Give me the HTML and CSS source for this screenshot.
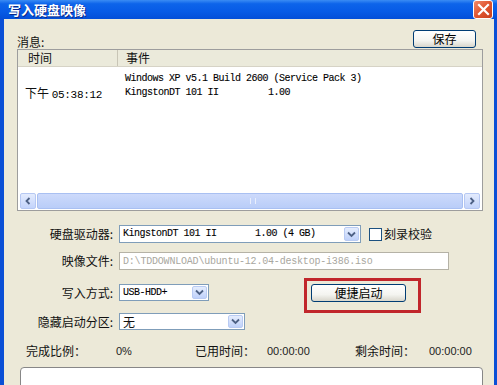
FILE: index.html
```html
<!DOCTYPE html>
<html>
<head>
<meta charset="utf-8">
<link rel="stylesheet" href="styles.css">
</head>
<body>
<div class="window">
  <div class="titlebar">
    <span class="title">写入硬盘映像</span>
    <span class="close"><svg width="13" height="13" viewBox="0 0 13 13"><path d="M2 2 L11 11 M11 2 L2 11" stroke="#fff" stroke-width="2.2" stroke-linecap="square"/></svg></span>
  </div>
  <div class="content">
    <div class="toprow">
      <span class="lbl msg">消息:</span>
      <button class="btn save">保存</button>
    </div>
    <div class="list">
      <div class="lhead">
        <div class="hcol c1">时间</div>
        <div class="hcol c2">事件</div>
      </div>
      <div class="lbody">
        <div class="lrow"><span class="t1"></span><span class="mono">Windows XP v5.1 Build 2600 (Service Pack 3)</span></div>
        <div class="lrow"><span class="t1">下午 <span class="mono">05:38:12</span></span><span class="mono">KingstonDT 101 II         1.00</span></div>
      </div>
      <div class="hscroll">
        <span class="sbtn"><svg width="8" height="8" viewBox="0 0 8 8"><path d="M5.5 1 L2.5 4 L5.5 7" fill="none" stroke="#4d6185" stroke-width="1.8"/></svg></span>
        <span class="strack"><span class="grip"></span></span>
        <span class="sbtn"><svg width="8" height="8" viewBox="0 0 8 8"><path d="M2.5 1 L5.5 4 L2.5 7" fill="none" stroke="#4d6185" stroke-width="1.8"/></svg></span>
      </div>
    </div>
    <div class="form">
      <div class="frow r1">
        <span class="flabel">硬盘驱动器:</span>
        <div class="combo w-drive"><span class="ctext mono">KingstonDT 101 II       1.00 (4 GB)</span><span class="drop"><svg width="9" height="7" viewBox="0 0 9 7"><path d="M1 1.5 L4.5 5 L8 1.5" fill="none" stroke="#4d6185" stroke-width="1.8"/></svg></span></div>
        <span class="check"></span><span class="clabel">刻录校验</span>
      </div>
      <div class="frow r2">
        <span class="flabel">映像文件:</span>
        <div class="textbox"><span class="mono dis">D:\TDDOWNLOAD\ubuntu-12.04-desktop-i386.iso</span></div>
      </div>
      <div class="frow r3">
        <span class="flabel">写入方式:</span>
        <div class="combo w-mode"><span class="ctext mono">USB-HDD+</span><span class="drop"><svg width="9" height="7" viewBox="0 0 9 7"><path d="M1 1.5 L4.5 5 L8 1.5" fill="none" stroke="#4d6185" stroke-width="1.8"/></svg></span></div>
        <button class="btn quick">便捷启动</button>
      </div>
      <div class="frow r4">
        <span class="flabel">隐藏启动分区:</span>
        <div class="combo w-hide"><span class="ctext">无</span><span class="drop"><svg width="9" height="7" viewBox="0 0 9 7"><path d="M1 1.5 L4.5 5 L8 1.5" fill="none" stroke="#4d6185" stroke-width="1.8"/></svg></span></div>
      </div>
    </div>
    <div class="status">
      <span>完成比例：</span><span class="num">0%</span>
      <span>已用时间：</span><span class="num">00:00:00</span>
      <span>剩余时间：</span><span class="num">00:00:00</span>
    </div>
    <div class="progress"></div>
  </div>
  <div class="highlight"></div>
</div>
</body>
</html>
```
FILE: styles.css
```css
* { box-sizing: border-box; }
html, body { margin: 0; padding: 0; }
body {
  width: 497px; height: 385px; overflow: hidden;
  font-family: "Noto Sans CJK SC", "Liberation Sans", sans-serif;
  font-size: 12px; color: #111;
  background: #ECE9D8;
}
.window {
  position: relative;
  width: 497px; height: 385px;
  background: #ECE9D8;
  border-left: 4px solid #0a4fd6;
  border-right: 3px solid #0a4fd6;
  display: flex; flex-direction: column;
}
.titlebar {
  margin: 0 -3px 0 -4px;
  height: 22px;
  background: linear-gradient(#3a8cf4 0%, #0d64ea 20%, #075be6 60%, #034fd8 100%);
  display: flex; align-items: center; justify-content: space-between;
  padding: 0 4px 0 8px;
}
.title {
  color: #fff; font-weight: bold; font-size: 13px; line-height: 15px;
  text-shadow: 1px 1px 0 #0b2a8a;
}
.close {
  width: 20px; height: 19px;
  border: 1px solid #fff; border-radius: 3px;
  background: linear-gradient(135deg, #f08a6c 0%, #e0552f 50%, #c8401e 100%);
  display: flex; align-items: center; justify-content: center;
}
.content {
  padding: 11px 0 0 13px;
  flex: 1;
  display: flex; flex-direction: column;
}
.toprow {
  display: flex; align-items: flex-end; justify-content: space-between;
  height: 18px; width: 459px;
}
.msg { line-height: 14px; margin-bottom: -1px; }
.btn {
  font-family: "Noto Sans CJK SC", sans-serif; font-size: 12px;
  border: 1px solid #003c74; border-radius: 3px;
  background: linear-gradient(#ffffff 0%, #f4f4f0 60%, #d8d6cc 100%);
  padding: 0; line-height: 14px; color: #000;
}
.save { width: 63px; height: 18px; }
.list {
  margin-top: 1px;
  width: 466px; height: 162px;
  border: 1px solid #9d9d9d;
  background: #fff;
  display: flex; flex-direction: column;
}
.lhead {
  height: 17px; display: flex;
  background: #ebeadb;
  border-bottom: 1px solid #d6d3c6;
}
.hcol { line-height: 16px; }
.c1 { width: 100px; padding-left: 10px; border-right: 1px solid #c8c5b6; }
.c2 { padding-left: 8px; }
.lbody { flex: 1; padding-top: 4px; }
.lrow { display: flex; height: 14px; align-items: center; }
.t1 { width: 107px; padding-left: 7px; }
.mono {
  font-family: "Liberation Mono", monospace; font-size: 10px; letter-spacing: -0.5px;
  white-space: pre; color: #000;
  -webkit-text-stroke: 0.1px #000;
}
.t1 .mono { letter-spacing: -0.3px; font-size: 11px; -webkit-text-stroke: 0; }
.hscroll {
  height: 16px; margin: 0 2px 1px 2px;
  display: flex; gap: 1px;
}
.sbtn {
  width: 16px; height: 16px;
  background: linear-gradient(#e3ebfd, #c3d4fb);
  border: 1px solid #b6c8f3; border-radius: 2px;
  display: flex; align-items: center; justify-content: center;
}
.strack {
  flex: 1; height: 16px;
  background: linear-gradient(#cddafb, #b9cdf8);
  border: 1px solid #a9c0f2; border-radius: 2px;
  position: relative;
}
.grip {
  position: absolute; left: 50%; top: 4px; width: 6px; height: 6px;
  border-left: 1px solid #e8eefc; border-right: 1px solid #e8eefc;
}
.form { margin-top: 14px; display: flex; flex-direction: column; }
.frow { display: flex; align-items: center; height: 18px; }
.r2 { margin-top: 9px; }
.r3 { margin-top: 14px; height: 17px; }
.r4 { margin-top: 12px; height: 17px; }
.flabel { width: 96px; text-align: right; margin-right: 6px; white-space: nowrap; line-height: 14px; }
.combo {
  height: 100%;
  border: 1px solid #7f9db9; background: #fff;
  display: flex; align-items: center; justify-content: space-between;
  padding: 1px 1px 1px 3px;
}
.combo .ctext { line-height: 14px; }
.drop {
  width: 15px; height: 100%;
  border: 1px solid #b9cbf3; border-radius: 2px;
  background: linear-gradient(#e5edfd, #bfd1fa);
  display: flex; align-items: center; justify-content: center;
}
.w-drive { width: 242px; }
.w-mode { width: 90px; }
.w-hide { width: 126px; }
.check {
  width: 13px; height: 13px; border: 1px solid #1c5180; background: #fff;
  margin-left: 8px;
}
.clabel { margin-left: 2px; line-height: 14px; }
.textbox {
  width: 330px; height: 100%;
  border: 1px solid #b5b2a6; background: #fff;
  display: flex; align-items: center; padding-left: 3px;
}
.mono.dis { color: #a9a7a0; letter-spacing: -0.2px; -webkit-text-stroke: 0; }
.quick { width: 95px; height: 18px; margin-left: 102px; margin-top: 1px; }
.status {
  margin-top: 14px; height: 14px;
  display: grid; grid-template-columns: 90px 79px 72px 88px 74px auto;
  padding-left: 9px; align-items: center; line-height: 14px;
  font-size: 12px;
}
.status .num { font-family: "Liberation Sans", sans-serif; font-size: 11px; color: #222; }
.progress {
  margin-top: 9px; margin-left: 3px;
  width: 463px; height: 22px;
  border: 1px solid #878787; border-radius: 4px;
  background: #fff;
}
.highlight {
  position: absolute; left: 300px; top: 278px;
  width: 117px; height: 35px;
  border: 3px solid #c1262b;
}
```
